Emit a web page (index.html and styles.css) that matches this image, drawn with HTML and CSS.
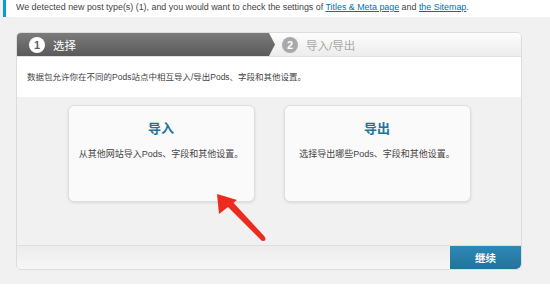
FILE: index.html
```html
<!DOCTYPE html>
<html lang="zh">
<head>
  <meta charset="UTF-8" />
  <title>Pods 数据包</title>
  <link rel="stylesheet" href="styles.css">
</head>
<body>
  <div class="page">
    <div class="notice">
      We detected new post type(s) (1), and you would want to check the settings of
      <a href="#">Titles &amp; Meta page</a> and <a href="#">the Sitemap</a>.
    </div>

    <div class="wizard">
      <div class="steps">
        <div class="step current"><span class="num">1</span>选择</div>
        <div class="step"><span class="num">2</span>导入/导出</div>
      </div>

      <div class="intro">数据包允许你在不同的Pods站点中相互导入/导出Pods、字段和其他设置。</div>

      <div class="choices">
        <div class="card">
          <h3>导入</h3>
          <p>从其他网站导入Pods、字段和其他设置。</p>
        </div>
        <div class="card">
          <h3>导出</h3>
          <p>选择导出哪些Pods、字段和其他设置。</p>
        </div>
      </div>

      <div class="actions">
        <button class="next">继续</button>
      </div>
    </div>
  </div>

  <svg class="pointer" width="550" height="290" viewBox="0 0 550 290">
    <polygon points="217,194 219,214 237,200" fill="#ec2a1e" />
    <polygon points="225,204 230,199 265,237 262,241" fill="#ec2a1e" />
    <circle cx="263.5" cy="239" r="2" fill="#ec2a1e" />
  </svg>
</body>
</html>
```

FILE: styles.css
```css
html, body {
  margin: 0;
  background: #fff;
}

body {
  font-family: "Liberation Sans", "Noto Sans CJK SC", sans-serif;
  color: #333;
  position: relative;
}

.page {
  background: #f1f1f1;
  padding-bottom: 14px;
}

.notice {
  margin-left: 3px;
  border-left: 3px solid #00a0d2;
  background: #fff;
  height: 17px;
  line-height: 15px;
  padding-left: 10px;
  font-size: 8.9px;
  color: #444;
  white-space: nowrap;
}

.notice a {
  color: #0073aa;
}

.wizard {
  margin: 15px 28px 0 16px;
  border: 1px solid #dcdcdc;
  border-radius: 5px;
  overflow: hidden;
  background: #f1f1f1;
}

.steps {
  display: flex;
  height: 24px;
  background: linear-gradient(#fdfdfd, #ececec);
  border-bottom: 1px solid #e2e2e2;
  box-sizing: border-box;
}

.step {
  display: flex;
  align-items: center;
  font-size: 11.5px;
  color: #a8a8a8;
  padding-left: 7px;
}

.step.current {
  width: 246px;
  padding-left: 12px;
  color: #fff;
  background: linear-gradient(#7b7b7b, #5a5a5a);
  clip-path: polygon(0 0, calc(100% - 6px) 0, 100% 50%, calc(100% - 6px) 100%, 0 100%);
}

.num {
  width: 16px;
  height: 16px;
  border-radius: 50%;
  background: #a9a9a9;
  color: #fff;
  font-weight: bold;
  font-size: 11px;
  display: flex;
  align-items: center;
  justify-content: center;
  margin-right: 8px;
}

.current .num {
  background: #fff;
  color: #5f5f5f;
}

.intro {
  background: #fff;
  height: 40px;
  box-sizing: border-box;
  padding: 13px 10px 0;
  font-size: 8.5px;
  color: #444;
}

.choices {
  display: flex;
  justify-content: center;
  gap: 29px;
  height: 148px;
  padding-top: 8px;
  box-sizing: border-box;
}

.card {
  width: 187px;
  height: 97px;
  box-sizing: border-box;
  background: #fafafa;
  border: 1px solid #dedede;
  border-radius: 6px;
  box-shadow: 0 1px 3px rgba(0, 0, 0, 0.1);
  text-align: center;
}

.card h3 {
  margin: 12px 0 0;
  font-size: 13px;
  color: #21759b;
}

.card p {
  margin: 10px 0 0;
  font-size: 9px;
  color: #444;
}

.actions {
  display: flex;
  justify-content: flex-end;
  height: 23px;
  background: linear-gradient(#ececec, #f7f7f7);
  border-top: 1px solid #dedede;
}

.next {
  width: 71px;
  border: none;
  background: linear-gradient(#2e89b6, #22739a);
  color: #fff;
  font-family: inherit;
  font-size: 10.5px;
  font-weight: bold;
  border-bottom-right-radius: 5px;
  cursor: pointer;
}

.pointer {
  position: absolute;
  left: 0;
  top: 0;
  pointer-events: none;
}
```
